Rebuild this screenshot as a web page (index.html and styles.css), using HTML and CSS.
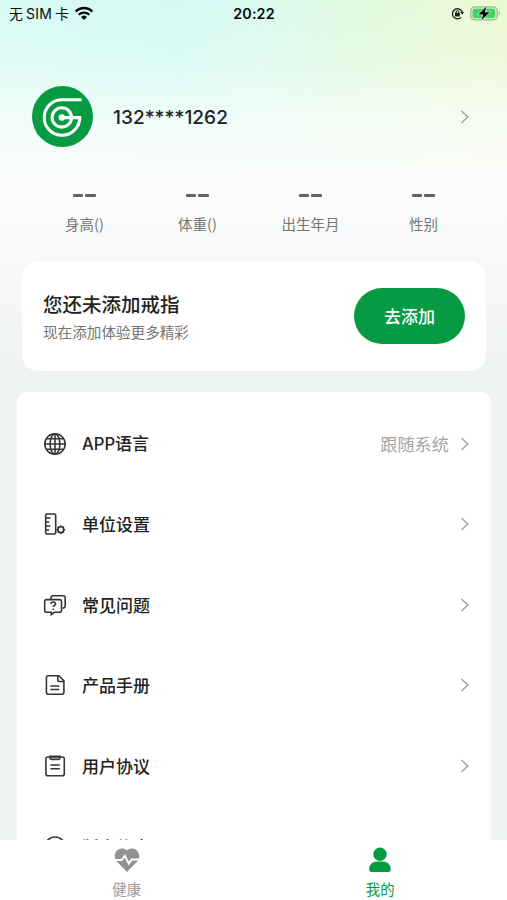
FILE: index.html
```html
<!DOCTYPE html>
<html lang="zh-CN">
<head>
<meta charset="utf-8">
<title>我的</title>
<link rel="stylesheet" href="styles.css">
</head>
<body>
<svg class="defs" width="0" height="0"><symbol id="chev" viewBox="0 0 10 16"><path d="M1.5 2l6.3 6-6.3 6" fill="none" stroke="currentColor" stroke-width="1.5"/></symbol></svg>
<div class="app">
  <header class="status">
    <div class="carrier"><span>无</span><span class="sim">SIM</span><span>卡</span>
      <svg width="20" height="15" viewBox="0 0 20 15" fill="none" stroke="#080c0b"><path d="M1.6 5.5a12 12 0 0 1 16.8 0" stroke-width="2.5"/><path d="M4.7 8.8a7.6 7.6 0 0 1 10.6 0" stroke-width="2.3"/><path d="M10 14l-3-3a4.3 4.3 0 0 1 6 0z" fill="#080c0b" stroke="none"/></svg>
    </div>
    <div class="clock">20:22</div>
    <div class="indicators">
      <svg width="13" height="13" viewBox="0 0 13 13" fill="none" stroke="#16200f"><path d="M10.2 10.4A5.1 5.1 0 1 1 11.3 5" stroke-width="1.3"/><path d="M9.4 5h3.5l-1.6 2.7z" fill="#16200f" stroke="none"/><rect x="4" y="5.8" width="4.8" height="3.6" rx=".5" fill="#16200f" stroke="none"/><path d="M5 6V5a1.4 1.4 0 0 1 2.8 0v1" stroke-width="1"/></svg>
      <svg width="31" height="15" viewBox="0 0 31 15"><rect x=".7" y=".9" width="26.6" height="13" rx="4" fill="#c9efc5" stroke="#a1b698" stroke-width="1.2"/><rect x="2.6" y="2.8" width="22.6" height="9.2" rx="2.3" fill="#42d166"/><path d="M28.6 5.3c1.7.7 1.7 3.5 0 4.2z" fill="#a1b698"/><path d="M16.5 .6L8.4 8.6h4.9L11.3 14.2l8.4-8h-5z" fill="#050805" stroke="#c9efc5" stroke-width="1.4" paint-order="stroke"/></svg>
    </div>
  </header>

  <section class="profile">
    <svg class="avatar" viewBox="0 0 61 61"><circle cx="30.5" cy="30.5" r="30.5" fill="#069b43"/><g fill="none" stroke="#fff" stroke-width="3.1"><path d="M49.7 13.7H30.5A17.8 17.8 0 1 0 47.8 31.6H29.5"/><circle cx="29.8" cy="31.4" r="9.7"/></g><circle cx="29.8" cy="31.5" r="3.2" fill="#fff"/></svg>
    <div class="phone">132****1262</div>
    <svg class="chev"><use href="#chev"/></svg>
  </section>

  <section class="stats">
    <div class="stat"><div class="dash"><i></i><i></i></div><span>身高()</span></div>
    <div class="stat"><div class="dash"><i></i><i></i></div><span>体重()</span></div>
    <div class="stat"><div class="dash"><i></i><i></i></div><span>出生年月</span></div>
    <div class="stat"><div class="dash"><i></i><i></i></div><span>性别</span></div>
  </section>

  <section class="device">
    <div><h2>您还未添加戒指</h2><p>现在添加体验更多精彩</p></div>
    <button class="add">去添加</button>
  </section>

  <main class="menu">
    <div class="row">
      <svg class="icon" viewBox="0 0 24 24"><circle cx="12" cy="12" r="10.2"/><ellipse cx="12" cy="12" rx="4.9" ry="10.2"/><path d="M12 1.8v20.4M1.8 12h20.4M3.4 6.8h17.2M3.4 17.2h17.2"/></svg>
      <span class="label"><span class="latin">APP</span>语言</span><span class="value">跟随系统</span><svg class="chev"><use href="#chev"/></svg>
    </div>
    <div class="row">
      <svg class="icon" viewBox="0 0 24 24"><rect x="2.7" y="2" width="10" height="20" rx="1.2"/><path d="M3 6h4.5M3 10h3.2M3 14h4.5M3 18h3.2"/><circle cx="17.8" cy="17.7" r="2.9"/><path d="M17.8 13.3v1.5M17.8 20.6v1.5M13.4 17.7h1.5M20.7 17.7h1.5M14.7 14.6l1.1 1.1M19.8 19.7l1.1 1.1M20.9 14.6l-1.1 1.1M15.8 19.7l-1.1 1.1" stroke-width="1.5"/></svg>
      <span class="label">单位设置</span><svg class="chev"><use href="#chev"/></svg>
    </div>
    <div class="row">
      <svg class="icon" viewBox="0 0 24 24"><path d="M8 6.5V4.8c0-1.2.8-2 2-2h10c1.3 0 2.2.9 2.2 2v8c0 1.5-1 2.3-2.6 2.3"/><path d="M3.7 6.6h12.8c1.2 0 2 .8 2 2v8.7c0 1.2-.8 2-2 2h-5.1L8.3 21.6v-2.3H3.7c-1.2 0-2-.8-2-2V8.6c0-1.2.8-2 2-2z"/><path d="M8 11c0-2.6 4.5-2.6 4.5 0 0 1.5-2.2 1.5-2.2 3.1M10.3 15.6v1.5"/></svg>
      <span class="label">常见问题</span><svg class="chev"><use href="#chev"/></svg>
    </div>
    <div class="row">
      <svg class="icon" viewBox="0 0 24 24"><path d="M5.4 2.8h10.5l5 5v11.4c0 1.2-.8 2-2 2H5.4c-1.2 0-2-.8-2-2V4.8c0-1.2.8-2 2-2zM14.8 3v3.7c0 1.1.7 1.8 1.8 1.8h4M7.4 13h9M7.4 16.5h9"/></svg>
      <span class="label">产品手册</span><svg class="chev"><use href="#chev"/></svg>
    </div>
    <div class="row">
      <svg class="icon" viewBox="0 0 24 24"><rect x="2.9" y="3" width="18.4" height="18.8" rx="2"/><path d="M7 2.4h10v1.4c0 1-.6 1.6-1.6 1.6H8.6C7.6 5.4 7 4.8 7 3.8zM7.4 11h9.4M7.4 14.7h9.4"/></svg>
      <span class="label">用户协议</span><svg class="chev"><use href="#chev"/></svg>
    </div>
    <div class="row">
      <svg class="icon" viewBox="0 0 24 24"><circle cx="12" cy="12" r="10"/><path d="M12 6.5v2M12 10.5v7"/></svg>
      <span class="label">版本信息</span><svg class="chev"><use href="#chev"/></svg>
    </div>
  </main>

  <nav class="tabs">
    <div class="tab">
      <svg width="26" height="26" viewBox="0 0 26 26"><path d="M13 25L3 14.8C-3 8.2 4-3 13 3.2 22-3 29 8.2 23 14.8z" fill="#929292"/><path d="M0 13h7.6l3.2-4.2 4.1 7.8 2.7-4.1H26" fill="none" stroke="#fff" stroke-width="1.9"/></svg>
      <span>健康</span>
    </div>
    <div class="tab active">
      <svg width="26" height="26" viewBox="0 0 26 26" fill="#069b43"><circle cx="13" cy="7.3" r="6.7"/><path d="M2.2 22.5C2.2 17.5 6 14.6 10 14.6h6c4 0 7.8 2.9 7.8 7.9 0 1.7-.8 2.5-2.4 2.5H4.6c-1.6 0-2.4-.8-2.4-2.5z"/></svg>
      <span>我的</span>
    </div>
  </nav>
</div>
</body>
</html>
```
FILE: styles.css
```css
* { box-sizing: border-box; margin: 0; padding: 0; }
body {
  font-family: "Noto Sans CJK SC", sans-serif;
  color: #222;
  overflow: hidden;
}
.defs { display: block; }
.app {
  width: 507px;
  height: 900px;
  display: flex;
  flex-direction: column;
  overflow: hidden;
  background:
    linear-gradient(180deg, rgba(251, 253, 252, 0) 0, rgba(251, 253, 252, .2) 60px, rgba(251, 253, 252, .65) 115px, #fbfcfb 185px, #f8faf9 240px, #eff3f2 370px, #eff3f2 100%),
    linear-gradient(90deg, #d9fbf4 0, #d5faf3 35%, #dbfaf0 50%, #dffae0 68%, #e8fad8 87%, #ebf9d4 100%);
}
.status {
  flex: none;
  height: 28px;
  display: grid;
  grid-template-columns: 1fr auto 1fr;
  align-items: center;
  padding: 0 6px 1px 9px;
  color: #080c0b;
}
.carrier { display: flex; align-items: center; font-size: 14px; line-height: 20px; }
.carrier > span { margin-top: -1px; }
.carrier svg { margin-left: 5px; margin-top: -1px; }
.carrier .sim { font-family: Inter, sans-serif; font-size: 14px; letter-spacing: .2px; margin: 0 3px 0 3px; }
.clock { font: 600 14.3px/20px Inter, sans-serif; letter-spacing: .15px; margin-right: 2px; }
.indicators { display: flex; align-items: center; justify-content: flex-end; gap: 6px; }
.profile {
  flex: none;
  height: 61px;
  margin-top: 58px;
  padding: 0 37px 0 32px;
  display: flex;
  align-items: center;
}
.avatar { width: 61px; height: 61px; }
.phone { flex: 1; margin-left: 20px; padding-top: 1px; font: 500 19.1px/24px Inter, sans-serif; }
.chev { flex: none; width: 10px; height: 16px; color: #a2a4a3; }
.stats {
  flex: none;
  display: grid;
  grid-template-columns: repeat(4, 113px);
  padding: 47px 0 0 28px;
  height: 114px;
}
.stat { display: flex; flex-direction: column; align-items: center; gap: 16px; }
.stat span { font-size: 14.5px; line-height: 22px; color: #747675; }
.dash { display: flex; gap: 2px; height: 3px; margin-left: -1px; }
.dash i { width: 10.5px; height: 3px; background: #626463; border-radius: 1px; }
.device {
  flex: none;
  height: 110px;
  margin: 0 21px 0 22px;
  padding: 0 21px;
  display: flex;
  align-items: center;
  justify-content: space-between;
  background: #fff;
  border-radius: 16px;
}
.device h2 { font-size: 19.5px; font-weight: 500; line-height: 28px; }
.device p { font-size: 14.6px; line-height: 22px; margin-top: 3px; color: #757575; }
.add {
  width: 111px;
  height: 56px;
  border: 0;
  border-radius: 28px;
  background: #069b43;
  color: #fff;
  font: 500 17px/24px "Noto Sans CJK SC", sans-serif;
}
.menu {
  flex: 1;
  min-height: 0;
  overflow: hidden;
  margin: 21px 16px 0 17px;
  padding: 11.4px 21px 0 26px;
  background: #fff;
  border-radius: 10px 10px 0 0;
}
.row { height: 80.6px; display: flex; align-items: center; }
.icon {
  width: 24px;
  height: 24px;
  fill: none;
  stroke: #353535;
  stroke-width: 1.6;
}
.label {
  flex: 1;
  margin-left: 15px;
  font-size: 17px;
  font-weight: 500;
  line-height: 24px;
}
.latin { font-family: Inter, sans-serif; font-size: 16.6px; }
.value { font-size: 17.2px; line-height: 24px; color: #a5a5a5; margin-right: 11px; }
.tabs {
  flex: none;
  height: 60px;
  display: grid;
  grid-template-columns: 1fr 1fr;
  background: #fff;
}
.tab {
  display: flex;
  flex-direction: column;
  align-items: center;
  padding-top: 7px;
  font-size: 14.4px;
  line-height: 22px;
  color: #9a9a9a;
}
.tab span { margin-top: 5px; }
.tab.active { color: #069b43; }
```
